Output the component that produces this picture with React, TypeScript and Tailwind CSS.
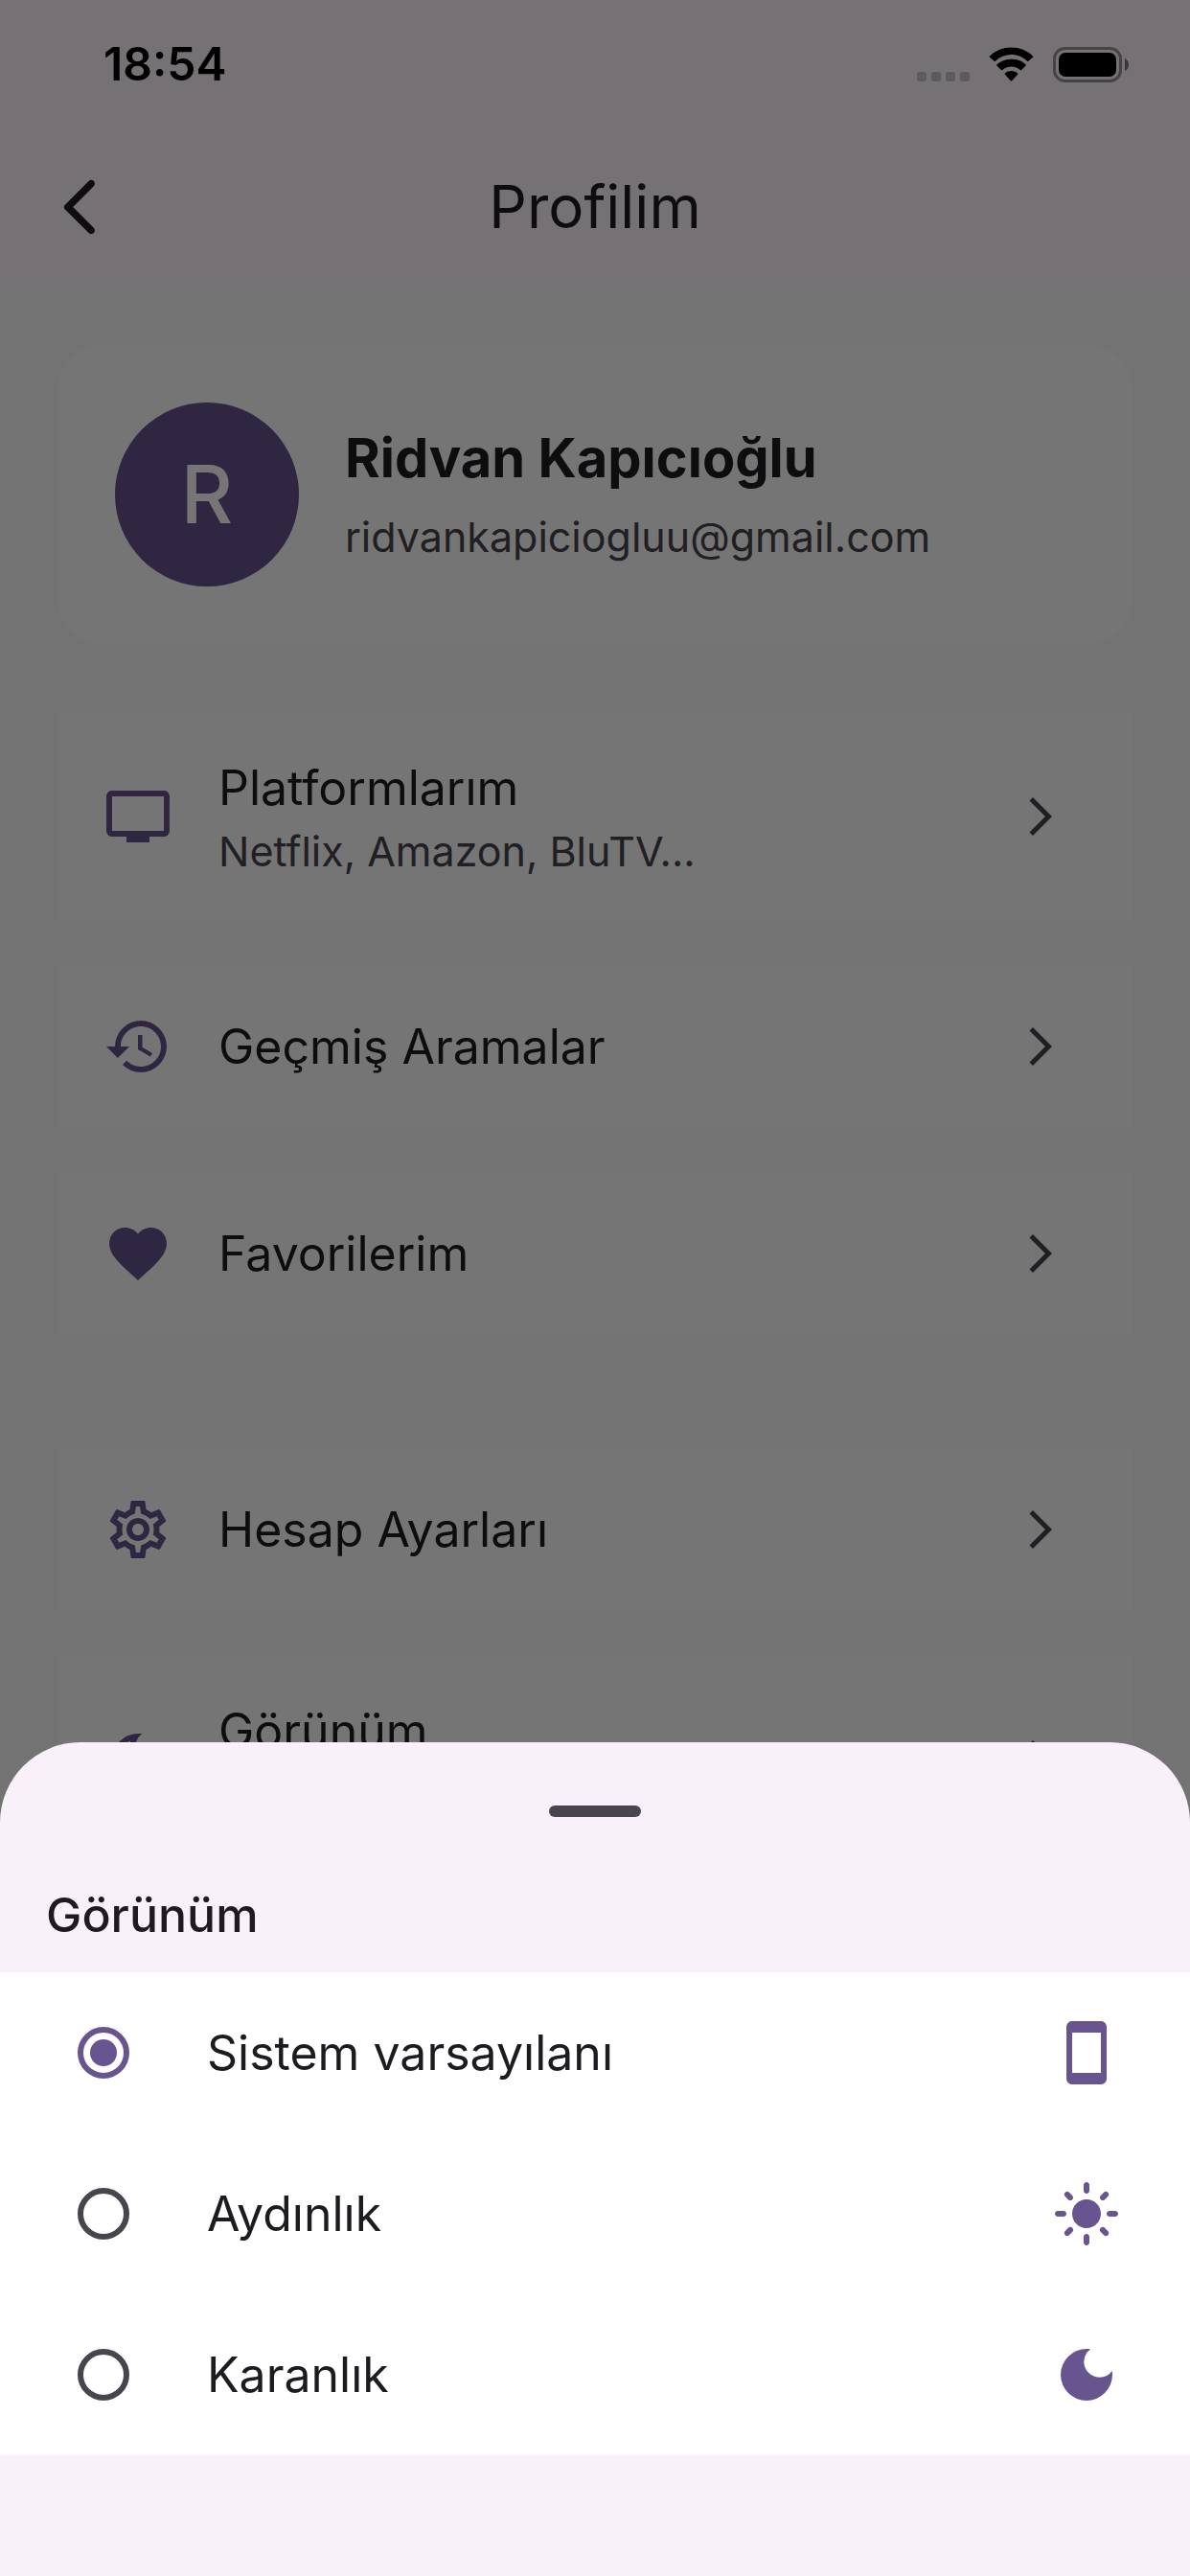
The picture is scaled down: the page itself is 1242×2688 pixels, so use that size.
import React, { useState } from 'react';
import {
  MdArrowForwardIos,
  MdDarkMode,
  MdFavorite,
  MdHistory,
  MdLightMode,
  MdOutlineDarkMode,
  MdOutlineSettings,
  MdStayCurrentPortrait,
  MdTv
} from 'react-icons/md';
import type { IconType } from 'react-icons';

interface MenuItemProps {
  icon: IconType;
  title: string;
  subtitle?: string;
  onClick?: () => void;
}

const themeOptions = [
  { value: 'system', label: 'Sistem varsayılanı', icon: MdStayCurrentPortrait },
  { value: 'light', label: 'Aydınlık', icon: MdLightMode },
  { value: 'dark', label: 'Karanlık', icon: MdDarkMode }
];

const StatusBar: React.FC = () => (
  <div className="relative z-20 flex h-[132px] items-center justify-between pl-[108px] pr-[63px] pt-0.5 text-black">
    <time className="text-[48px] leading-[60px] font-semibold">18:54</time>
    <div className="flex h-[37px] items-end gap-5">
      <svg className="h-[37px] w-[55px]" viewBox="0 0 55 37" fill="currentColor" opacity="0.2">
        <rect y="26" width="10" height="10" rx="3" />
        <rect x="15" y="26" width="10" height="10" rx="3" />
        <rect x="30" y="26" width="10" height="10" rx="3" />
        <rect x="45" y="26" width="10" height="10" rx="3" />
      </svg>
      <svg className="h-[37px] w-[47px]" viewBox="0 0 48 37" fill="currentColor">
        <path d="M24 7.8c6.6 0 12.6 2.6 17 6.9.4.3.9.3 1.2 0l4.8-4.2c.4-.4.4-.9 0-1.3A33.500 33.500 0 0 0 24 0 33.500 33.500 0 0 0 1 9.2c-.4.4-.4.9 0 1.300l4.800 4.200c.3.3.8.3 1.200 0A24.500 24.500 0 0 1 24 7.8Z" />
        <path d="M24 20.5c3.7 0 7 1.4 9.5 3.7.4.4.9.4 1.3 0l4.6-4.6c.4-.4.4-1 0-1.4A22.3 22.3 0 0 0 24 12.7c-5.900 0-11.400 2.1-15.400 5.500-.4.4-.4 1 0 1.400l4.600 4.600c.4.4.9.4 1.300 0 2.500-2.300 5.800-3.700 9.500-3.700Z" />
        <path d="M30.7 28.9c.4-.4.4-1 0-1.4a10.600 10.600 0 0 0-13.400 0c-.4.4-.4 1 0 1.400l6 6.700c.4.4 1 .4 1.400 0Z" />
      </svg>
      <svg className="h-[37px] w-20" viewBox="0 0 80 37" fill="currentColor">
        <rect x="1.5" y="1.5" width="69" height="34" rx="11" fill="none" stroke="currentColor" strokeWidth="3" opacity="0.4" />
        <path d="M75 12v13c2.600-1.100 4-3.600 4-6.500s-1.400-5.400-4-6.500Z" opacity="0.5" />
        <rect x="6" y="6" width="60" height="25" rx="7" />
      </svg>
    </div>
  </div>
);

const MenuItem: React.FC<MenuItemProps> = ({ icon: Icon, title, subtitle, onClick }) => (
  <button
    type="button"
    onClick={onClick}
    className={`flex w-full items-center gap-12 bg-white pl-12 pr-[72px] text-left ${subtitle ? 'h-[216px]' : 'h-[168px]'}`}
  >
    <Icon className="size-[72px] shrink-0 text-[#68548e]" />
    <span className="flex-1">
      <span className="block text-[50px] leading-[72px] text-[#1d1b20]">{title}</span>
      {subtitle && (
        <span className="block text-[43px] leading-[60px] text-[#49454e]">{subtitle}</span>
      )}
    </span>
    <MdArrowForwardIos className="size-12 shrink-0 text-[#49454e]" />
  </button>
);

export default function App() {
  const [theme, setTheme] = useState('system');
  const [sheetOpen, setSheetOpen] = useState(true);

  return (
    <div className="min-h-screen bg-[#fafafa] font-['Inter','Liberation_Sans',sans-serif]">
      <header className="bg-[#fef7ff]">
        <StatusBar />
        <div className="grid h-[168px] grid-cols-[1fr_auto_1fr] items-center px-12">
          <button type="button" aria-label="Geri" className="size-[72px] text-[#1d1b20]">
            <svg viewBox="0 0 24 24" fill="currentColor">
              <path d="M16.62 2.99c-.49-.49-1.28-.49-1.77 0L6.54 11.3c-.39.39-.39 1.02 0 1.41l8.31 8.31c.49.49 1.28.49 1.77 0s.49-1.28 0-1.77L9.38 12l7.25-7.25c.48-.48.48-1.28-.01-1.76z" />
            </svg>
          </button>
          <h1 className="text-[62px] leading-[84px] text-[#1d1b20]">Profilim</h1>
        </div>
      </header>

      <main className="px-[60px] py-[60px]">
        <section className="flex items-center gap-12 rounded-[48px] bg-white p-[60px]">
          <div className="flex size-[192px] shrink-0 items-center justify-center rounded-full bg-[#68548e] text-[84px] font-medium text-white">
            R
          </div>
          <div>
            <h2 className="text-[56px] leading-[72px] font-bold text-[#1d1b20]">Ridvan Kapıcıoğlu</h2>
            <p className="mt-4 text-[43px] leading-[60px] text-[#49454e]">ridvankapiciogluu@gmail.com</p>
          </div>
        </section>

        <nav className="mt-[72px] flex flex-col gap-12">
          <MenuItem icon={MdTv} title="Platformlarım" subtitle="Netflix, Amazon, BluTV..." />
          <MenuItem icon={MdHistory} title="Geçmiş Aramalar" />
          <MenuItem icon={MdFavorite} title="Favorilerim" />
        </nav>
        <nav className="mt-[120px] flex flex-col gap-12">
          <MenuItem icon={MdOutlineSettings} title="Hesap Ayarları" />
          <MenuItem
            icon={MdOutlineDarkMode}
            title="Görünüm"
            subtitle="Sistem varsayılanı"
            onClick={() => setSheetOpen(true)}
          />
        </nav>
      </main>

      {sheetOpen && (
        <>
          <div className="fixed inset-0 z-10 bg-black/54" onClick={() => setSheetOpen(false)} />
          <div
            role="dialog"
            aria-labelledby="sheet-title"
            className="fixed inset-x-0 bottom-0 z-30 rounded-t-[84px] bg-[#f8f1fa] pb-[126px]"
          >
            <div className="flex h-36 items-center justify-center">
              <span className="h-3 w-24 rounded-full bg-[#49454e]" />
            </div>
            <h2 id="sheet-title" className="px-12 pb-6 text-[50px] leading-[72px] font-medium text-[#1d1b20]">
              Görünüm
            </h2>
            <div role="radiogroup" aria-labelledby="sheet-title" className="bg-white">
              {themeOptions.map(({ value, label, icon: Icon }) => (
                <label key={value} className="flex h-[168px] items-center gap-9 pl-9 pr-[72px]">
                  <span className="flex w-36 justify-center">
                    <input
                      type="radio"
                      name="theme"
                      value={value}
                      checked={theme === value}
                      onChange={() => setTheme(value)}
                      className="grid size-[54px] appearance-none place-items-center rounded-full border-6 border-[#49454e] before:size-7 before:rounded-full checked:border-[#68548e] checked:before:bg-[#68548e]"
                    />
                  </span>
                  <span className="flex-1 text-[50px] leading-[72px] text-[#1d1b20]">{label}</span>
                  <Icon className="size-[72px] text-[#68548e]" />
                </label>
              ))}
            </div>
          </div>
        </>
      )}
    </div>
  );
}
